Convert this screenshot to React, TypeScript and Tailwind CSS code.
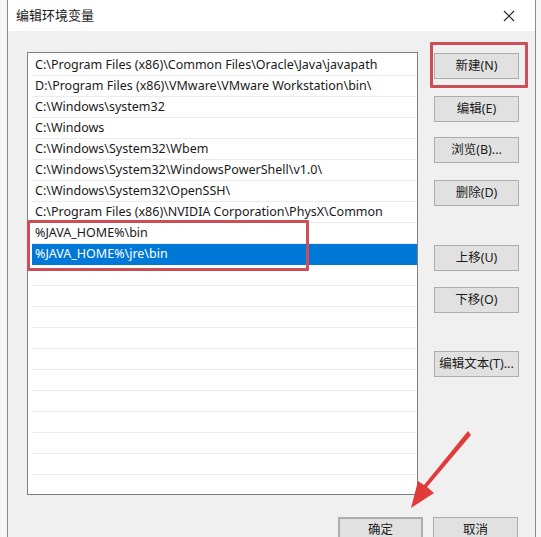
import React from "react";

const rows = [
  "C:\\Program Files (x86)\\Common Files\\Oracle\\Java\\javapath",
  "D:\\Program Files (x86)\\VMware\\VMware Workstation\\bin\\",
  "C:\\Windows\\system32",
  "C:\\Windows",
  "C:\\Windows\\System32\\Wbem",
  "C:\\Windows\\System32\\WindowsPowerShell\\v1.0\\",
  "C:\\Windows\\System32\\OpenSSH\\",
  "C:\\Program Files (x86)\\NVIDIA Corporation\\PhysX\\Common",
  "%JAVA_HOME%\\bin",
  "%JAVA_HOME%\\jre\\bin",
  "",
  "",
  "",
  "",
  "",
  "",
  "",
  "",
  "",
  "",
  "",
];

const font = { fontFamily: '"Noto Sans", "Noto Sans CJK SC", sans-serif' };

function Btn({ label, className = "" }: { label: string; className?: string }) {
  return (
    <div
      className={
        "w-[85px] h-[26px] flex items-center justify-center bg-[#e1e1e1] border border-[#adadad] text-[12.5px] text-[#1a1a1a] " +
        className
      }
    >
      {label}
    </div>
  );
}

export default function App() {
  return (
    <div className="relative w-[541px] h-[537px] overflow-hidden bg-[#f6f6f6]" style={font}>
      <div className="ml-[7px] w-[529px] h-[560px] border-l border-r border-[#8a8a8a] bg-[#f0f0f0] flex flex-col">
        <div className="h-[31px] bg-white flex items-center justify-between pl-[8px] pr-[20px] pt-[1px]">
          <span className="text-[13px] text-[#1a1a1a]">编辑环境变量</span>
          <svg width="12" height="12" viewBox="0 0 12 12">
            <path d="M1 1 L11 11 M11 1 L1 11" stroke="#222" strokeWidth="1.1" />
          </svg>
        </div>
        <div className="pl-[19px] pt-[21px]">
          <div className="flex gap-[16px]">
            <div className="w-[391px] h-[443px] bg-white border border-[#7f7f7f] pl-[4px] pt-[2px] overflow-hidden">
              {rows.map((r, i) => (
                <div
                  key={i}
                  className={
                    "h-[21px] flex items-center pl-[3px] text-[12.5px] whitespace-nowrap border-b " +
                    (i === 9
                      ? "bg-[#0078d7] text-white border-[#0078d7]"
                      : "text-[#1a1a1a] border-[#ececec]")
                  }
                >
                  {r}
                </div>
              ))}
            </div>
            <div className="flex flex-col pt-[1px]">
              <Btn label="新建(N)" />
              <Btn label="编辑(E)" className="mt-[17px]" />
              <Btn label="浏览(B)..." className="mt-[15px]" />
              <Btn label="删除(D)" className="mt-[17px]" />
              <Btn label="上移(U)" className="mt-[39px]" />
              <Btn label="下移(O)" className="mt-[16px]" />
              <Btn label="编辑文本(T)..." className="mt-[38px]" />
            </div>
          </div>
          <div className="flex justify-end gap-[10px] pr-[17px] mt-[22px]">
            <Btn label="确定" className="border-[#0078d7] border-2" />
            <Btn label="取消" />
          </div>
        </div>
      </div>

      {/* red highlight boxes */}
      <div className="absolute left-[430px] top-[42px] w-[98px] h-[46px] border-[3px] border-[#cc4f57] rounded-[1px]" />
      <div className="absolute left-[27px] top-[220px] w-[282px] h-[51px] border-[3px] border-[#cc4f57] rounded-[1px]" />

      {/* arrow */}
      <svg className="absolute left-0 top-0" width="541" height="537" viewBox="0 0 541 537">
        <polygon points="468,431 471,435 427,487 434,493 411,508 418,481 424,485" fill="#e03a3a" />
      </svg>
    </div>
  );
}
